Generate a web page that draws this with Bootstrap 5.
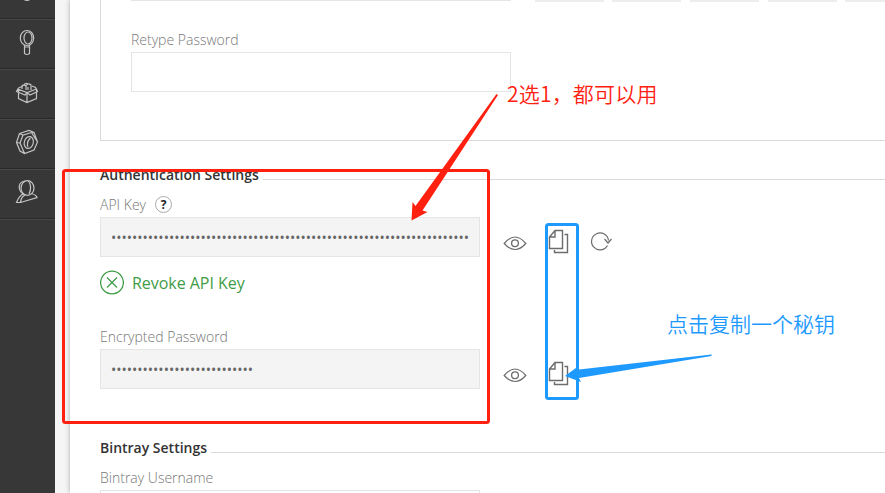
<!DOCTYPE html>
<html lang="en">
<head>
<meta charset="utf-8">
<title>User Profile</title>
<link href="https://cdn.jsdelivr.net/npm/bootstrap@5.3.0/dist/css/bootstrap.min.css" rel="stylesheet">
<style>
body{font-family:"Open Sans","Noto Sans CJK SC",sans-serif;width:885px;height:493px;background:#f5f5f5;color:#333}
.side{width:55px;background:#373737}
.side a{height:50px;border-bottom:1px solid #282828;border-top:1px solid #484848;color:#c4c4c4}
.side a.first{height:19px;border-top:0}
.side a.rest{height:auto;border-bottom:0}
.side svg{stroke-width:1.2;margin-right:1px}
svg{fill:none;stroke:currentColor;display:block}
.page{margin-left:15px;box-shadow:0 0 5px rgba(0,0,0,.3)}
.pwbox{height:141px;margin-left:30px;border-left:1px solid #d9d9d9;border-bottom:1px solid #d9d9d9;padding-left:30px}
.prev{height:2px;margin-bottom:28px}
.prev .line{width:380px;height:1px;background:#e5e5e5;margin-right:24px}
.prev .seg{width:69px;height:2px;background:#ededed;flex:none;margin-right:9px}
.prev .seg.tight{margin-right:8px}
.lbl{font-size:14px;font-weight:300;line-height:20px;color:#777}
.field{width:380px;height:40px;border:1px solid #e5e5e5;border-radius:0;background:#fff;padding:0 10px;margin-top:2px;font-size:14px;color:#666;line-height:38px;flex:none}
.field[readonly]{background:#f4f4f4}
.sect{padding:24px 0 0 30px}
.sect.bintray{padding-top:49px}
.ttl{font-size:14px;font-weight:600;line-height:20px;color:#333;gap:4px;margin-bottom:10px}
.ttl i{height:1px;background:#d9d9d9;margin-top:14px}
.help{width:17px;height:17px;border:1px solid #aaa;font-size:12px;font-weight:700;line-height:16px;color:#222;margin:-1px 0 0 9px}
.tools{color:#6c6c6c;padding-left:23px;height:40px;margin-top:2px}
.tools .copy{margin-left:21px}
.tools .redo{margin-left:13px}
.revoke{color:#3f9c46;font-size:16px;line-height:24px;gap:8px;margin:13px 0 32px;letter-spacing:-.04px}
.note{font-family:"Noto Sans CJK SC",sans-serif;font-size:21px;line-height:30px;font-weight:350;white-space:nowrap}
.n-red{left:507px;top:78px;color:#ff2010;letter-spacing:.2px}
.n-blue{left:667px;top:308px;color:#1e9aff}
</style>
</head>
<body class="overflow-hidden">
<div class="d-flex h-100 position-relative overflow-hidden">
<nav class="side d-flex flex-column flex-shrink-0">
  <a class="first d-flex justify-content-center"><svg width="12" height="3"><path d="M2.500 -1Q6 2 9.500 -1"/></svg></a>
  <a class="d-flex justify-content-center pt-2"><svg width="24" height="28" viewBox="0 0 24 28"><ellipse cx="12" cy="10" rx="6.700" ry="7.500"/><ellipse cx="13" cy="10" rx="4" ry="6"/><path d="M9.500 17V25.500Q12 27.500 14.500 25.500V17M9.500 19H14.500"/></svg></a>
  <a class="d-flex justify-content-center pt-2"><svg width="24" height="28" viewBox="0 0 24 28"><path d="M2.500 11L12 14.500L21.500 11V20.500L12 24.500L3.500 20.500V11.500M12 14.500V24.500M3.500 10L1.500 13.500L10 17L12 14.500L15 17L22.500 13.500L20.500 9.500L17 8M3.500 10L8 8M7 11V8Q9 6 11 8V12M11 8Q13 4.500 16 7V12M9 7Q10 4.500 13 6M13 9V12"/></svg></a>
  <a class="d-flex justify-content-center pt-2"><svg width="24" height="28" viewBox="0 0 24 28"><path d="M4.500 5.500L14 2.500L19 4.500L22.500 14L19 22L9.500 25.500L5 23L1.500 14.500ZM4.500 5.500L8 7L16.500 4.500L19 4.500M8 7L5 15L9.500 25.500M5 15L1.500 14.500M16.500 4.500L22.500 14"/><ellipse cx="13.800" cy="14.500" rx="4.500" ry="6" transform="rotate(15 13.800 14.500)"/><path d="M15.500 10Q11 14 13 19"/></svg></a>
  <a class="d-flex justify-content-center pt-2"><svg width="24" height="28" viewBox="0 0 24 28"><ellipse cx="12.500" cy="10" rx="6.500" ry="7.300"/><path d="M10 3Q3 4 4.500 11Q5 14 8 16Q4 18 1.500 24.500H5.500L22 19.500Q21 16.500 16 15.500M8 16L10 17Q6 19 5.500 24.500M13.500 3Q17.500 9 14 16"/></svg></a>
  <a class="rest flex-grow-1"></a>
</nav>
<main class="page bg-white flex-grow-1 overflow-hidden">
  <section class="pwbox">
    <div class="prev d-flex overflow-hidden">
      <div class="line flex-shrink-0"></div>
      <div class="seg tight"></div><div class="seg"></div><div class="seg"></div><div class="seg tight"></div><div class="seg"></div>
    </div>
    <label class="lbl d-block" for="retype">Retype Password</label>
    <input id="retype" class="field d-block" type="password">
  </section>
  <section class="sect">
    <div class="ttl d-flex"><span>Authentication Settings</span><i class="flex-grow-1"></i></div>
    <div class="lbl d-flex align-items-center">API Key<span class="help rounded-circle text-center">?</span></div>
    <div class="d-flex">
      <input class="field" readonly aria-label="API Key" value="••••••••••••••••••••••••••••••••••••••••••••••••••••••••••••••••••••">
      <div class="tools d-flex">
        <svg width="24" height="40"><path stroke-width="1.200" d="M1.200 26.500Q12 13.500 22.800 26.500Q12 38.500 1.200 26.500Z"/><circle cx="12" cy="26.300" r="3.400" stroke-width="1.300"/></svg>
        <svg class="copy" width="28" height="40"><path stroke-width="1.400" d="M7 13.500H14.500V31.500H1.500V20ZM7 13.500V20H1.500M16.500 17.500H19.500V35.500H6.500V33"/></svg>
        <svg class="redo" width="26" height="40"><path stroke-width="1.200" d="M18.500 28.500A8.500 8.500 0 1 1 19.500 23.500M15.500 22L19 26L22.500 22"/></svg>
      </div>
    </div>
    <div class="revoke d-flex align-items-center"><svg width="24" height="25"><circle cx="12" cy="12.500" r="11.400" stroke-width="1.300"/><path d="M7 7.500L17 17.500M17 7.500L7 17.500" stroke-width="1.200"/></svg><span>Revoke API Key</span></div>
    <div class="lbl">Encrypted Password</div>
    <div class="d-flex">
      <input class="field" readonly aria-label="Encrypted Password" value="•••••••••••••••••••••••••••">
      <div class="tools d-flex">
        <svg width="24" height="40"><path stroke-width="1.200" d="M1.200 26.500Q12 13.500 22.800 26.500Q12 38.500 1.200 26.500Z"/><circle cx="12" cy="26.300" r="3.400" stroke-width="1.300"/></svg>
        <svg class="copy" width="28" height="40"><path stroke-width="1.400" d="M7 13.500H14.500V31.500H1.500V20ZM7 13.500V20H1.500M16.500 17.500H19.500V35.500H6.500V33"/></svg>
      </div>
    </div>
  </section>
  <section class="sect bintray">
    <div class="ttl d-flex"><span>Bintray Settings</span><i class="flex-grow-1"></i></div>
    <label class="lbl d-block" for="bint">Bintray Username</label>
    <input id="bint" class="field d-block">
  </section>
</main>
<svg class="position-absolute top-0 start-0 pe-none" width="885" height="493">
  <rect x="63.500" y="170.500" width="425" height="252" rx="2" stroke="#ff2010" stroke-width="3"/>
  <rect x="546.500" y="224.500" width="31" height="174" rx="2" stroke="#1e9aff" stroke-width="3"/>
  <path d="M496.500 94L498 95L422.500 210.500L427.500 212L411.500 220.500L412.500 202L415.500 206Z" fill="#ff2010" stroke="none"/>
  <path d="M711.500 354.500L711.500 356L579 378L581 382L565 376L578 366.500L579 369.500Z" fill="#1e9aff" stroke="none"/>
</svg>
<div class="note n-red position-absolute">2选1，都可以用</div>
<div class="note n-blue position-absolute">点击复制一个秘钥</div>
</div>
<script src="https://cdn.jsdelivr.net/npm/bootstrap@5.3.0/dist/js/bootstrap.bundle.min.js"></script>
</body>
</html>
